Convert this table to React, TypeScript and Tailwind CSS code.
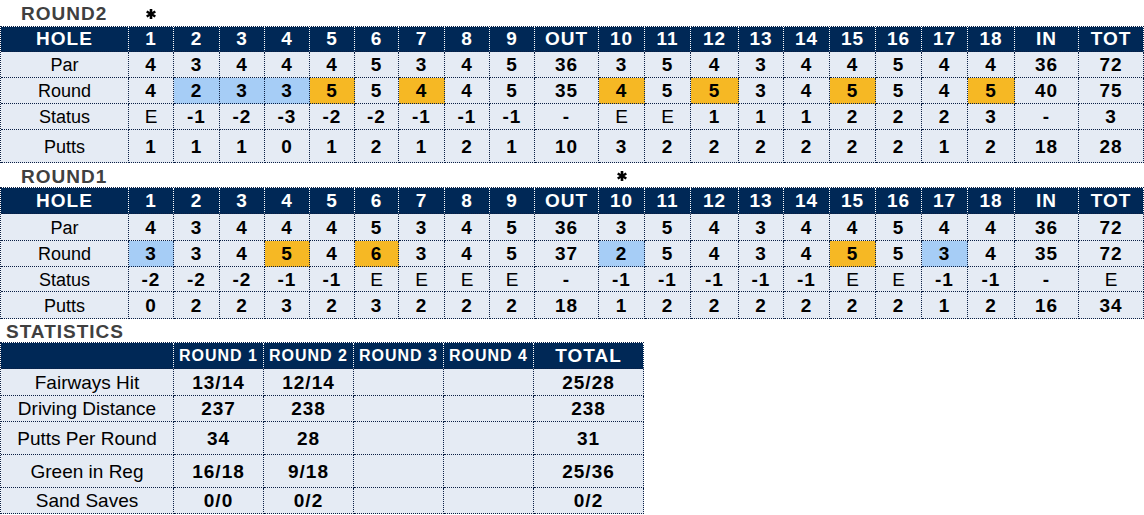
import React from "react";

const COLS = "grid-cols-[128px_45px_46px_45px_45px_45px_44px_46px_45px_45px_64px_46px_46px_48px_45px_46px_46px_46px_46px_47px_64px_65px]";

type Hl = "b" | "o" | undefined;

interface RoundData {
  title: string;
  rowH: [string, string, string, string, string];
  par: (string | number)[];
  round: (string | number)[];
  hl: Record<number, Hl>;
  status: (string | number)[];
  putts: (string | number)[];
}

const header = ["HOLE", "1", "2", "3", "4", "5", "6", "7", "8", "9", "OUT", "10", "11", "12", "13", "14", "15", "16", "17", "18", "IN", "TOT"];
const par = [4, 3, 4, 4, 4, 5, 3, 4, 5, 36, 3, 5, 4, 3, 4, 4, 5, 4, 4, 36, 72];

const rounds: RoundData[] = [
  {
    title: "ROUND2",
    rowH: ["h-[25px]", "h-[26px]", "h-[26px]", "h-[26px]", "h-[33px]"],
    par,
    round: [4, 2, 3, 3, 5, 5, 4, 4, 5, 35, 4, 5, 5, 3, 4, 5, 5, 4, 5, 40, 75],
    hl: { 1: "b", 2: "b", 3: "b", 4: "o", 6: "o", 10: "o", 12: "o", 15: "o", 18: "o" },
    status: ["E", "-1", "-2", "-3", "-2", "-2", "-1", "-1", "-1", "-", "E", "E", "1", "1", "1", "2", "2", "2", "3", "-", "3"],
    putts: [1, 1, 1, 0, 1, 2, 1, 2, 1, 10, 3, 2, 2, 2, 2, 2, 2, 1, 2, 18, 28],
  },
  {
    title: "ROUND1",
    rowH: ["h-[26px]", "h-[27px]", "h-[26px]", "h-[25px]", "h-[27px]"],
    par,
    round: [3, 3, 4, 5, 4, 6, 3, 4, 5, 37, 2, 5, 4, 3, 4, 5, 5, 3, 4, 35, 72],
    hl: { 0: "b", 3: "o", 5: "o", 10: "b", 15: "o", 17: "b" },
    status: ["-2", "-2", "-2", "-1", "-1", "E", "E", "E", "E", "-", "-1", "-1", "-1", "-1", "-1", "E", "E", "-1", "-1", "-", "E"],
    putts: [0, 2, 2, 3, 2, 3, 2, 2, 2, 18, 1, 2, 2, 2, 2, 2, 2, 1, 2, 16, 34],
  },
];

const Star = () => (
  <svg width="10" height="10" viewBox="0 0 10 10" className="block">
    <g stroke="#000" strokeWidth="2.6" strokeLinecap="butt">
      <line x1="5" y1="0" x2="5" y2="10" />
      <line x1="0.7" y1="2.5" x2="9.3" y2="7.5" />
      <line x1="0.7" y1="7.5" x2="9.3" y2="2.5" />
    </g>
  </svg>
);

const bodyCell = "border-r border-b border-dotted border-[#0a1f44] flex items-center justify-center pt-[2px]";
const headCell = "border-r border-b border-dotted border-r-white border-b-[#0a1f44] bg-[#002856] text-white flex items-center justify-center font-bold pt-[1px]";

function Scorecard({ d }: { d: RoundData }) {
  const rows: { label: string; vals: (string | number)[]; isRound?: boolean; isStatus?: boolean }[] = [
    { label: "Par", vals: d.par },
    { label: "Round", vals: d.round, isRound: true },
    { label: "Status", vals: d.status, isStatus: true },
    { label: "Putts", vals: d.putts },
  ];
  return (
    <div className={`grid ${COLS} border-l border-t border-dotted border-[#0a1f44] w-[1144px]`}>
      {header.map((h, i) => (
        <div key={i} className={`${headCell} ${d.rowH[0]} text-[19px] tracking-[1px]`}>
          {h}
        </div>
      ))}
      {rows.map((r, ri) => (
        <React.Fragment key={ri}>
          <div className={`${bodyCell} ${d.rowH[ri + 1]} bg-[#e5ebf4] text-[18px] text-black`}>{r.label}</div>
          {r.vals.map((v, vi) => {
            const hl = r.isRound ? d.hl[vi] : undefined;
            const bg = hl === "b" ? "bg-[#a6cdf6]" : hl === "o" ? "bg-[#f6b824]" : "bg-[#e5ebf4]";
            const normal = r.isStatus && v === "E";
            return (
              <div
                key={vi}
                className={`${bodyCell} ${d.rowH[ri + 1]} ${bg} text-[19px] text-black ${normal ? "font-normal" : "font-bold tracking-[1px]"}`}
              >
                {v}
              </div>
            );
          })}
        </React.Fragment>
      ))}
    </div>
  );
}

const statRows = [
  { label: "Fairways Hit", r1: "13/14", r2: "12/14", tot: "25/28", h: "h-[27px]" },
  { label: "Driving Distance", r1: "237", r2: "238", tot: "238", h: "h-[26px]" },
  { label: "Putts Per Round", r1: "34", r2: "28", tot: "31", h: "h-[33px]" },
  { label: "Green in Reg", r1: "16/18", r2: "9/18", tot: "25/36", h: "h-[33px]" },
  { label: "Sand Saves", r1: "0/0", r2: "0/2", tot: "0/2", h: "h-[26px]" },
];

const statVal = "text-[19px] font-bold tracking-[1px] text-black";

export default function App() {
  return (
    <div className="w-[1144px] h-[515px] bg-white overflow-hidden font-['Liberation_Sans',Arial,sans-serif]">
      {/* ROUND2 */}
      <div className="h-[26px] flex items-center">
        <div className="pl-[21px] w-[146px] font-bold text-[19px] tracking-[1px] text-[#404040] leading-none pt-[1px]">ROUND2</div>
        <div className="mt-[1px]"><Star /></div>
      </div>
      <Scorecard d={rounds[0]} />
      {/* ROUND1 */}
      <div className="h-[24px] flex items-center relative">
        <div className="pl-[21px] font-bold text-[19px] tracking-[1px] text-[#404040] leading-none pt-[2px]">ROUND1</div>
        <div className="absolute left-[617px] top-[8px]"><Star /></div>
      </div>
      <Scorecard d={rounds[1]} />
      {/* STATISTICS */}
      <div className="h-[23px] flex items-center">
        <div className="pl-[6px] font-bold text-[19px] tracking-[1px] text-[#404040] leading-none pt-[2px]">STATISTICS</div>
      </div>
      <div className="grid grid-cols-[173px_90px_90px_90px_90px_110px] border-l border-t border-dotted border-[#0a1f44] w-[644px]">
        <div className={`${headCell} h-[26px]`}></div>
        {["ROUND 1", "ROUND 2", "ROUND 3", "ROUND 4"].map((t) => (
          <div key={t} className={`${headCell} h-[26px] text-[16px] tracking-[1px]`}>{t}</div>
        ))}
        <div className={`${headCell} h-[26px] text-[19px] tracking-[1px]`}>TOTAL</div>
        {statRows.map((r) => (
          <React.Fragment key={r.label}>
            <div className={`${bodyCell} ${r.h} bg-[#e5ebf4] text-[19px] text-black`}>{r.label}</div>
            <div className={`${bodyCell} ${r.h} bg-[#e5ebf4] ${statVal}`}>{r.r1}</div>
            <div className={`${bodyCell} ${r.h} bg-[#e5ebf4] ${statVal}`}>{r.r2}</div>
            <div className={`${bodyCell} ${r.h} bg-[#e5ebf4]`}></div>
            <div className={`${bodyCell} ${r.h} bg-[#e5ebf4]`}></div>
            <div className={`${bodyCell} ${r.h} bg-[#e5ebf4] ${statVal}`}>{r.tot}</div>
          </React.Fragment>
        ))}
      </div>
    </div>
  );
}
